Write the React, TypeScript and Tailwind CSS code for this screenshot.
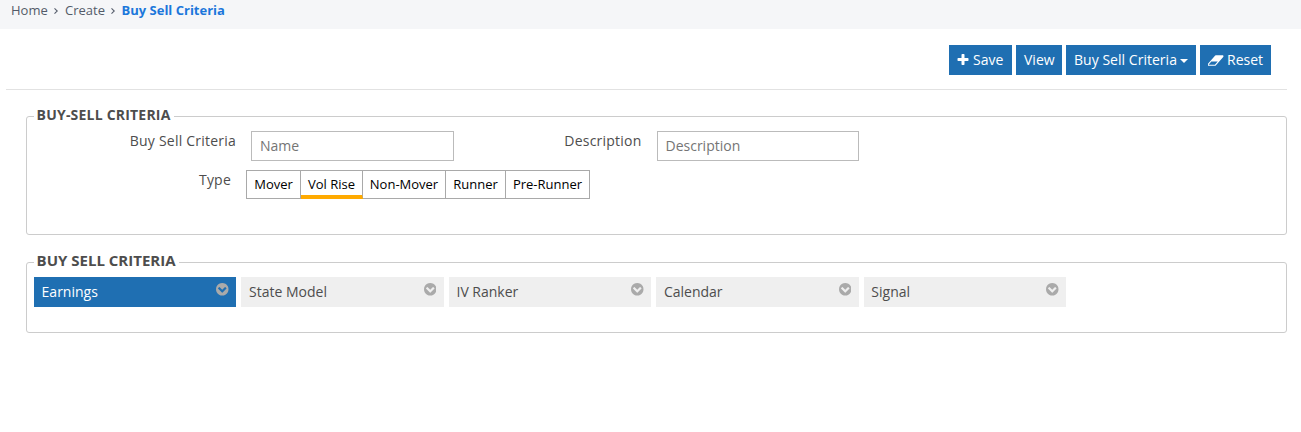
import React from "react";

const ICONS = {
  plus: "M1600 736v192q0 40-28 68t-68 28h-416v416q0 40-28 68t-68 28h-192q-40 0-68-28t-28-68v-416h-416q-40 0-68-28t-28-68v-192q0-40 28-68t68-28h416v-416q0-40 28-68t68-28h192q40 0 68 28t28 68v416h416q40 0 68 28t28 68z",
  eraser:
    "M832 1408l336-384h-768l-336 384h768zm1013-1077q15 34 9.5 71.5t-30.5 65.5l-896 1024q-38 44-96 44h-768q-38 0-69.5-20.5t-47.5-54.5q-15-34-9.5-71.5t30.5-65.5l896-1024q38-44 96-44h768q38 0 69.5 20.5t47.5 54.5z",
  chevron:
    "M941 1299l454-454q19-19 19-45t-19-45l-102-102q-19-19-45-19t-45 19l-307 307-307-307q-19-19-45-19t-45 19l-102 102q-19 19-19 45t19 45l454 454q19 19 45 19t45-19zm723-403q0 209-103 385.5t-279.5 279.5-385.5 103-385.5-103-279.5-279.5-103-385.5 103-385.5 279.5-279.5 385.5-103 385.5 103 279.5 279.5 103 385.5z",
};

function Separator({ className }: { className: string }) {
  return (
    <span className={className}>
      <svg viewBox="0 0 4 6" className="mt-2 ml-[1px] h-[6px] w-[4px]" fill="none" stroke="currentColor" strokeWidth="1.1">
        <path d="M0.5 0.4L3.3 3L0.5 5.6" />
      </svg>
    </span>
  );
}

function Panel({
  title,
  className,
  legendClassName,
  children,
}: {
  title: string;
  className: string;
  legendClassName: string;
  children: React.ReactNode;
}) {
  return (
    <fieldset className={`ml-[26px] w-[1261px] rounded-[3px] border border-[#ccc] pl-[7px] ${className}`}>
      <legend className={`pr-[3px] pl-[2.6px] font-bold whitespace-nowrap text-[#4d4d4d] ${legendClassName}`}>{title}</legend>
      {children}
    </fieldset>
  );
}

function ToolButton({ className, children }: { className: string; children: React.ReactNode }) {
  return (
    <button className={`flex h-[30px] items-center bg-[#1f6fb2] pl-2 text-[14px] whitespace-nowrap text-white ${className}`}>
      {children}
    </button>
  );
}

const TYPES = [
  { label: "Mover", width: "w-[54px]" },
  { label: "Vol Rise", width: "w-[62px]" },
  { label: "Non-Mover", width: "w-[83px]" },
  { label: "Runner", width: "w-[60px]" },
  { label: "Pre-Runner", width: "w-[84px]" },
];

const TABS = ["Earnings", "State Model", "IV Ranker", "Calendar", "Signal"];

export default function App() {
  return (
    <div className="h-[432px] overflow-hidden bg-white font-['Open_Sans',sans-serif] text-[14px] leading-5 text-[#4d4d4d]">
      <nav className="flex h-[29px] bg-[#f5f6f8] pl-[11px] text-[13px] text-[#535b69]">
        <span className="w-[42px]">Home</span>
        <Separator className="w-3" />
        <span className="w-[45px]">Create</span>
        <Separator className="w-[11.5px]" />
        <span className="font-bold text-[#1c77db]">Buy Sell Criteria</span>
      </nav>

      <header className="ml-[6px] flex h-[61px] w-[1281px] justify-end gap-1 border-b border-[#e2e2e2] pt-4 pr-4">
        <ToolButton className="w-[63px]">
          <svg viewBox="192 0 1408 1792" className="mr-1 h-[14px] w-[12px] shrink-0" fill="currentColor">
            <path d={ICONS.plus} />
          </svg>
          Save
        </ToolButton>
        <ToolButton className="w-[46px]">View</ToolButton>
        <ToolButton className="w-[130px]">
          <span className="w-[106px] text-left tracking-[0.03px]">Buy Sell Criteria</span>
          <svg viewBox="0 0 8 4" className="mt-0.5 h-1 w-2 shrink-0" fill="currentColor">
            <path d="M0 0h8L4 4z" />
          </svg>
        </ToolButton>
        <ToolButton className="w-[71px]">
          <svg viewBox="0 0 1920 1792" className="mr-[3px] h-[15px] w-[16px] shrink-0" fill="currentColor">
            <path d={ICONS.eraser} />
          </svg>
          Reset
        </ToolButton>
      </header>

      <Panel title="BUY-SELL CRITERIA" className="mt-4 h-[129px]" legendClassName="h-[21px] text-[14px] leading-[18px] tracking-[0.2px]">
        <div className="mt-[4px] flex">
          <label className="w-[202px] text-right tracking-[0.22px]">Buy Sell Criteria</label>
          <input
            placeholder="Name"
            className="ml-[15px] h-[30px] w-[203px] border border-[#bbb] px-2 pb-[2px] outline-none placeholder:text-[#757575]"
          />
          <label className="w-[187.5px] text-right tracking-[0.22px]">Description</label>
          <input
            placeholder="Description"
            className="ml-[15.5px] h-[30px] w-[202px] border border-[#bbb] pr-2 pl-[7.5px] pb-[2px] outline-none placeholder:text-[#757575]"
          />
        </div>
        <div className="mt-[9px] flex">
          <label className="w-[197px] text-right tracking-[0.22px]">Type</label>
          <div className="ml-[15px] flex h-[29px] border-l border-[#a9a9a9] text-[13px] text-black">
            {TYPES.map((t, i) => (
              <button
                key={t.label}
                className={`flex flex-col items-center border-t border-r border-[#a9a9a9] pt-[3px] leading-5 whitespace-nowrap ${t.width} ${
                  i === 1 ? "border-b-4 border-b-[#ffaa00]" : "border-b"
                }`}
              >
                {t.label}
              </button>
            ))}
          </div>
        </div>
      </Panel>

      <Panel title="BUY SELL CRITERIA" className="mt-4 h-[82px]" legendClassName="h-[23px] text-[15px] leading-[18px]">
        <div className="mt-[3px] flex gap-[5.15px]">
          {TABS.map((t, i) => (
            <div
              key={t}
              className={`flex h-[30px] w-[202.3px] justify-between pt-[5px] pr-[7.5px] pl-[7.6px] ${
                i === 0 ? "bg-[#1f6fb2] text-white" : "bg-[#efefef]"
              }`}
            >
              {t}
              <svg viewBox="128 128 1536 1536" className="mt-px size-[12.5px] text-[#aaa]" fill="currentColor">
                <path d={ICONS.chevron} />
              </svg>
            </div>
          ))}
        </div>
      </Panel>
    </div>
  );
}
